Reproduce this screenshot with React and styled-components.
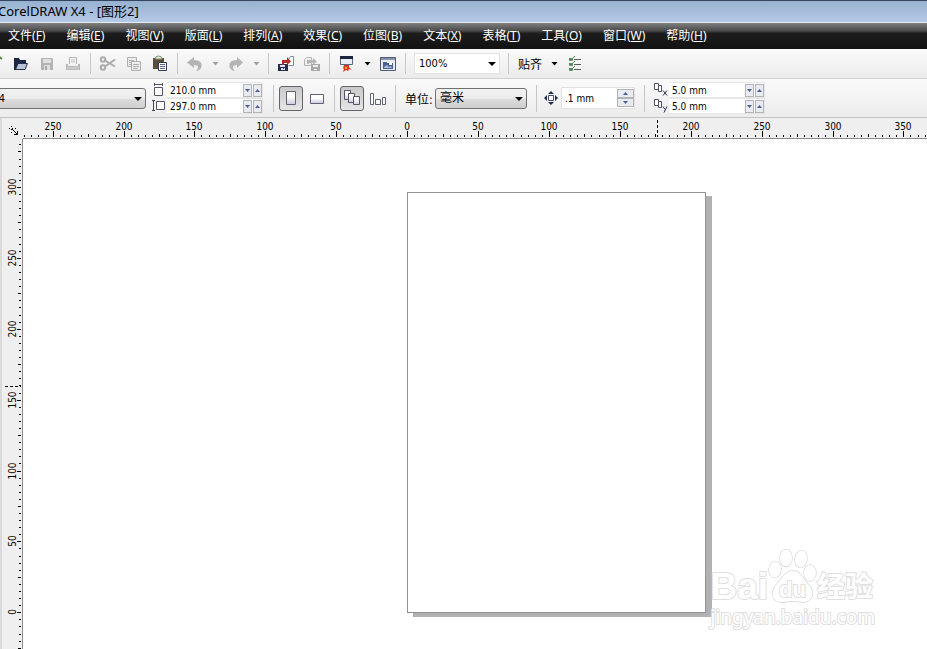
import React, { useEffect, useState } from 'react';
import styled, { createGlobalStyle } from 'styled-components';

const PX_PER_MM = 1.418;
const ORIGIN_X = 407.6;
const ORIGIN_Y = 473.8;
const RULER_SIZE = 23;
const HEADER_HEIGHT = 139;

const menus = [
    ['文件', 'F'], ['编辑', 'E'], ['视图', 'V'], ['版面', 'L'], ['排列', 'A'], ['效果', 'C'],
    ['位图', 'B'], ['文本', 'X'], ['表格', 'T'], ['工具', 'O'], ['窗口', 'W'], ['帮助', 'H'],
];

const readSize = () => ({ width: window.innerWidth, height: window.innerHeight });

const useWindowSize = () => {
    const [size, setSize] = useState(readSize);

    useEffect(() => {
        const onResize = () => setSize(readSize());
        window.addEventListener('resize', onResize);
        return () => window.removeEventListener('resize', onResize);
    }, []);

    return size;
};

// every 5 mm between the two positions, rounded inwards
const steps = (from, to) => {
    const list = [];
    const last = Math.floor(to / PX_PER_MM / 5) * 5;
    for (let mm = Math.ceil(from / PX_PER_MM / 5) * 5; mm <= last; mm += 5) list.push(mm);
    return list;
};

const tickLength = (mm, major) => {
    if (mm % 50 === 0) return major;
    return mm % 25 === 0 ? 3 : 2;
};

const Caret = ({ large }) => (
    large
        ? <svg width="8" height="4" viewBox="0 0 8 4"><path d="M0 0h8L4 4z" fill="currentColor" /></svg>
        : <svg width="7" height="4" viewBox="0 0 7 4"><path d="M.5 0h6l-3 3.500z" fill="currentColor" /></svg>
);

const icons = {
    create: <path d="M3 2h9v13H3z M12 1l4 3" fill="#fff" stroke="#4f8d3a" strokeWidth="2" />,
    open: (
        <>
            <path d="M2 3h5l1 2h6v3H7l-3 7H2z" fill="#1d2745" />
            <path d="M6 8.500h9.500l-2.500 6H3.500z" fill="#b9c4d6" stroke="#26304f" />
        </>
    ),
    save: (
        <>
            <path d="M3 3h11l1 1v11H3z" fill="#b3b3b3" />
            <path d="M5 4h8v4H5zM6 10h6v5H6z" fill="#e0e0e0" />
            <path d="M7 11h2v4H7z" fill="#aaa" />
        </>
    ),
    print: (
        <>
            <path d="M5.500 9V2.500h7V9" fill="#f4f4f4" stroke="#b5b5b5" />
            <path d="M2 9h2v2h10V9h2v6H2z" fill="#b9b9b9" />
            <path d="M7 5h4M7 7h4" stroke="#c2c2c2" />
            <path d="M3 13h12" stroke="#ddd" />
        </>
    ),
    cut: (
        <g fill="none" stroke="#ababab" strokeWidth="2">
            <circle cx="4" cy="4.500" r="2.200" />
            <circle cx="4" cy="12.500" r="2.200" />
            <path d="M6 5.500l10 6M6 11.500l10-7" />
        </g>
    ),
    copy: (
        <g fill="#eee" stroke="#b0b0b0">
            <path d="M2.500 2.500h9v9h-9z" />
            <path d="M6.500 6.500h9v9h-9z" />
            <path d="M4 5.500h5M4 7.500h2M4 9.500h2M8 9.500h6M8 11.500h6M8 13.500h5" />
        </g>
    ),
    paste: (
        <>
            <path d="M2 3h11v11H2z" fill="#5b4c3d" />
            <path d="M4 4h7a3.500 3 0 0 0-7 0z" fill="#e6e9dc" stroke="#84936f" />
            <path d="M7.500 7.500h8v8h-8z" fill="#fff" stroke="#303852" />
            <path d="M9 9.500h5M9 11.500h5M9 13.500h5" stroke="#59627e" />
        </>
    ),
    undo: <path d="M8 2v3c6 0 9 3 7 8-1 2-3 3-5 3 3-3 3-6-2-6v3L1 7.500z" fill="#b4b4b4" />,
    redo: <path d="M10 2v3c-6 0-9 3-7 8 1 2 3 3 5 3-3-3-3-6 2-6v3l6-5.500z" fill="#b4b4b4" />,
    importFile: (
        <>
            <path d="M11.500 4.500l2-3h3v9h-5" fill="#fff" stroke="#7988a6" />
            <path d="M1 9h10v7H1z" fill="#252c50" />
            <path d="M3 10h5v2H3zM4 13h4v2H4z" fill="#dfe4ee" />
            <path d="M6 13h1v1H6z" fill="#252c50" />
            <path d="M5 10V5h5V2l4 4.500L10 10V8H7v2z" fill="#b72a2a" />
        </>
    ),
    exportFile: (
        <>
            <path d="M1.500 4.500l2-2h5v8h-7z" fill="#eee" stroke="#b5b5b5" />
            <path d="M8 9h9v7H8z" fill="#aaa" />
            <path d="M10 10h5v2h-5zM11 14h3v1h-3z" fill="#eee" />
            <path d="M4 9V5h6V3l4 3.500L10 10V8H6v1z" fill="#b5b5b5" />
        </>
    ),
    launcher: (
        <>
            <path d="M2.500 2.500h12v7h-12z" fill="#e9edf4" stroke="#596783" />
            <path d="M2 1h13v3H2z" fill="#1c2442" />
            <path d="M6 10h5v2l3 3-3-1-1 2-2-1-3 2 1-3-1-1z" fill="#d9391f" />
            <path d="M7 12h2v2H7z" fill="#f3a73c" />
        </>
    ),
    welcome: (
        <>
            <path d="M1.500 2.500h15v13h-15z" fill="#e9edf3" stroke="#4b597c" />
            <path d="M2 3h14v2H2z" fill="#8791a8" />
            <path d="M4 7h4v1h6v6H4z" fill="#466190" />
            <path d="M10 7h3v3h-3z" fill="#fff" />
            <path d="M5 12l3-2 2 2 2-1 1 2H5z" fill="#a9bbd6" />
        </>
    ),
    options: (
        <>
            <path d="M8 4.500h7M8 9.500h7M8 14.500h7" stroke="#52605d" />
            <path d="M3.500 3.500h3v2h-3zM3.500 8.500h3v2h-3zM3.500 13.500h3v2h-3z" fill="none" stroke="#6a8570" />
            <path d="M3 3l2 2 4-4M3 8l2 2 4-4M3 13l2 2 4-4" fill="none" stroke="#4a8a50" />
        </>
    ),
    portrait: <path d="M4.500 2.500h9v13h-9z" fill="url(#sheet)" stroke="#606078" />,
    landscape: <path d="M2.500 5.500h13v9h-13z" fill="url(#sheet)" stroke="#606078" />,
    allPages: (
        <g fill="url(#sheet)" stroke="#555568">
            <path d="M1.500 1.500h6v9h-6z" />
            <path d="M5.500 4.500h6v9h-6z" />
            <path d="M10.500 7.500h6v8h-6z" />
        </g>
    ),
    onePage: (
        <g fill="#fff" stroke="#606078">
            <path d="M1.500 4.500h3v11h-3z" />
            <path d="M6.500 10.500h5v5h-5z" />
            <path d="M13.500 8.500h3v7h-3z" />
        </g>
    ),
    nudge: (
        <>
            <path d="M6.500 6.500h5v5h-5z" fill="#fff" stroke="#454e68" />
            <path d="M9 2l3 3H6zM9 16l3-3H6zM2 9l3-3v6zM16 9l-3-3v6z" fill="#242d4b" />
        </>
    ),
};

const Icon = ({ name }) => (
    <svg width="18" height="18" viewBox="0 0 18 18" aria-hidden="true">
        <defs>
            <linearGradient id="sheet" x1="0" y1="0" x2="0" y2="1">
                <stop offset="0.4" stopColor="#fff" />
                <stop offset="1" stopColor="#c8c9de" />
            </linearGradient>
        </defs>
        {icons[name]}
    </svg>
);

const WidthIcon = () => (
    <svg width="14" height="16" viewBox="0 0 14 16">
        <path d="M2.500 5.500h8v8h-8z" fill="#fff" stroke="#555568" />
        <path d="M2.500 1v3M10.500 1v3M3 2.500h7" stroke="#555568" />
    </svg>
);

const HeightIcon = () => (
    <svg width="14" height="16" viewBox="0 0 14 16">
        <path d="M4.500 3.500h8v8h-8z" fill="#fff" stroke="#555568" />
        <path d="M1.500 3v9M0 2.500h3M0 12.500h3" stroke="#454558" />
    </svg>
);

const OffsetIcon = ({ axis }) => (
    <svg width="16" height="16" viewBox="0 0 16 16">
        <path d="M2.500 1.500h4v6h-4z" fill="#fff" stroke="#4c526a" />
        <path d="M6.500 3.500h3v6h-3z" fill="#fff" stroke="#4c526a" />
        <path
            d={axis === 'x' ? 'M11 8.500l4 5M15 8.500l-4 5' : 'M11 8.500l2 3M15 8.500l-3 6'}
            stroke="#303650"
            fill="none"
        />
    </svg>
);

const Arrow = ({ up }) => (
    <svg width="5" height="3" viewBox="0 0 5 3"><path d={up ? 'M0 3h5L2.500 0z' : 'M0 0h5L2.500 3z'} fill="#4b5c92" /></svg>
);

const Tool = ({ name, label, disabled }) => (
    <ToolButton type="button" aria-label={label} disabled={disabled}><Icon name={name} /></ToolButton>
);

const Drop = ({ label, muted }) => (
    <DropButton type="button" aria-label={label} $muted={muted}><Caret /></DropButton>
);

const Spin = ({ id, label, icon, value }) => (
    <SpinRow>
        <FieldIcon htmlFor={id} aria-label={label}>{icon}</FieldIcon>
        <FieldBox>
            <Field id={id} defaultValue={value} />
            <StepButton type="button" aria-label={`${label} -`}><Arrow /></StepButton>
            <StepButton type="button" aria-label={`${label} +`}><Arrow up /></StepButton>
        </FieldBox>
    </SpinRow>
);

const HorizontalRuler = ({ width }) => (
    <TopRuler aria-hidden="true">
        {steps(RULER_SIZE - ORIGIN_X, width - ORIGIN_X).map((mm) => {
            const x = Math.floor(ORIGIN_X + mm * PX_PER_MM);
            const length = tickLength(mm, 6);
            return (
                <g key={mm}>
                    <rect x={x} y={19 - length} width="1" height={length} />
                    {mm % 50 === 0 && x < width - 10 && <text x={x} y="12" textAnchor="middle">{Math.abs(mm)}</text>}
                </g>
            );
        })}
        <path d="M657.500 2v17" stroke="#000" strokeDasharray="3 2" />
    </TopRuler>
);

const VerticalRuler = ({ height }) => (
    <SideRuler aria-hidden="true">
        {steps(ORIGIN_Y - height, ORIGIN_Y).map((mm) => {
            const y = Math.floor(ORIGIN_Y - mm * PX_PER_MM);
            const length = tickLength(mm, 4);
            return (
                <g key={mm}>
                    <rect x={19 - length} y={y} width={length} height="1" />
                    {mm % 50 === 0 && y < height - 10 && (
                        <text transform={`translate(14 ${y}) rotate(-90)`} textAnchor="middle">{Math.abs(mm)}</text>
                    )}
                </g>
            );
        })}
        <path d="M3 247.500h16" stroke="#000" strokeDasharray="3 2" />
    </SideRuler>
);

const Watermark = () => (
    <Mark>
        <Brand>
            <BrandText>Bai</BrandText>
            <Paw>
                <svg width="49" height="54" viewBox="0 0 49 54" fill="#fff" stroke="#d6d6d6" strokeWidth="1.300">
                    <ellipse cx="7" cy="20.500" rx="6" ry="8" transform="rotate(8 7 20.5)" />
                    <ellipse cx="18" cy="9" rx="6" ry="8.500" />
                    <ellipse cx="33" cy="10" rx="6" ry="8.500" transform="rotate(8 33 10)" />
                    <ellipse cx="42" cy="24" rx="6" ry="8" />
                    <path d="M25 22c8 0 9 7 15 13 7 7 6 17-4 18-4 0-7-1-11-1s-7 1-11 1C3 53 2 42 9 35c6-6 8-13 16-13z" />
                </svg>
                <PawText>du</PawText>
            </Paw>
            <BrandCjk>经验</BrandCjk>
        </Brand>
        <Site>jingyan.baidu.com</Site>
    </Mark>
);

const App = () => {
    const { width, height } = useWindowSize();

    return (
        <Window>
            <GlobalStyle />
            <TitleBar>CorelDRAW X4 - [图形2]</TitleBar>
            <MenuBar>
                {menus.map(([name, key]) => (
                    <MenuItem type="button" key={key}>{name}(<u>{key}</u>)</MenuItem>
                ))}
            </MenuBar>
            <Toolbar>
                <Tool name="create" label="新建" />
                <Tool name="open" label="打开" />
                <Tool name="save" label="保存" disabled />
                <Tool name="print" label="打印" disabled />
                <Divider />
                <Tool name="cut" label="剪切" disabled />
                <Tool name="copy" label="复制" disabled />
                <Tool name="paste" label="粘贴" />
                <Divider />
                <Tool name="undo" label="撤消" disabled />
                <Drop label="撤消列表" muted />
                <Tool name="redo" label="重做" disabled />
                <Drop label="重做列表" muted />
                <Divider />
                <Tool name="importFile" label="导入" />
                <Tool name="exportFile" label="导出" disabled />
                <Divider />
                <Tool name="launcher" label="应用程序启动器" />
                <Drop label="应用程序列表" />
                <Tool name="welcome" label="欢迎屏幕" />
                <Divider />
                <ZoomBox>
                    <ZoomSelect aria-label="缩放级别" defaultValue="100%"><option>100%</option></ZoomSelect>
                    <SelectArrow><Caret large /></SelectArrow>
                </ZoomBox>
                <Divider />
                <TextButton type="button">贴齐</TextButton>
                <Drop label="贴齐列表" />
                <Tool name="options" label="选项" />
            </Toolbar>
            <PropertyBar>
                <PaperBox>
                    <PaperSelect aria-label="纸张类型" defaultValue="A4"><option>A4</option></PaperSelect>
                    <SelectArrow><Caret large /></SelectArrow>
                </PaperBox>
                <SpinGroup>
                    <Spin id="paper-width" label="宽度" icon={<WidthIcon />} value="210.0 mm" />
                    <Spin id="paper-height" label="高度" icon={<HeightIcon />} value="297.0 mm" />
                </SpinGroup>
                <Divider $wide />
                <ToggleGroup>
                    <Toggle type="button" aria-label="纵向" aria-pressed="true" $pressed><Icon name="portrait" /></Toggle>
                    <Toggle type="button" aria-label="横向" aria-pressed="false"><Icon name="landscape" /></Toggle>
                </ToggleGroup>
                <Divider $wide />
                <ToggleGroup>
                    <Toggle type="button" aria-label="所有页面" aria-pressed="true" $pressed><Icon name="allPages" /></Toggle>
                    <Toggle type="button" aria-label="当前页面" aria-pressed="false"><Icon name="onePage" /></Toggle>
                </ToggleGroup>
                <Divider $wide />
                <UnitLabel htmlFor="units">单位:</UnitLabel>
                <UnitBox>
                    <Select id="units" defaultValue="毫米"><option>毫米</option></Select>
                    <SelectArrow><Caret large /></SelectArrow>
                </UnitBox>
                <Divider $wide />
                <FieldIcon htmlFor="nudge" aria-label="微调偏移"><Icon name="nudge" /></FieldIcon>
                <NudgeBox>
                    <Field id="nudge" defaultValue=".1 mm" />
                    <NudgeSteps>
                        <NudgeStep type="button" aria-label="微调偏移 +"><Arrow up /></NudgeStep>
                        <NudgeStep type="button" aria-label="微调偏移 -"><Arrow /></NudgeStep>
                    </NudgeSteps>
                </NudgeBox>
                <Divider $wide />
                <SpinGroup>
                    <Spin id="copy-x" label="再制距离 X" icon={<OffsetIcon axis="x" />} value="5.0 mm" />
                    <Spin id="copy-y" label="再制距离 Y" icon={<OffsetIcon axis="y" />} value="5.0 mm" />
                </SpinGroup>
            </PropertyBar>
            <RulerRow>
                <HorizontalRuler width={width} />
                <Corner>
                    <svg width="10" height="10" viewBox="0 0 10 10" stroke="#000" fill="none">
                        <path d="M0 2.500h9M2.500 0v9" strokeDasharray="1 2" />
                        <path d="M3 3l5 5M8.500 5v3.500H5" />
                    </svg>
                </Corner>
            </RulerRow>
            <Workspace>
                <VerticalRuler height={height - HEADER_HEIGHT} />
                <Canvas>
                    <Page />
                    <Watermark />
                </Canvas>
            </Workspace>
        </Window>
    );
};

export default App;


const GlobalStyle = createGlobalStyle`
    * {
        box-sizing: border-box;
    }
    body {
        margin: 0;
        background: #fff;
    }
    body, button, input, select {
        font-family: "DejaVu Sans Condensed", "Noto Sans CJK SC", sans-serif;
        font-size: 10px;
        color: #000;
    }
    button, input, select {
        margin: 0;
        padding: 0;
        border: 0;
        background: none;
    }
    svg {
        display: block;
    }
`;

const Window = styled.div`
    display: flex;
    flex-direction: column;
    min-height: 100vh;
    overflow: hidden;
`;

const TitleBar = styled.header`
    height: 23px;
    border-top: 1px solid #34465f;
    border-bottom: 1px solid #e4ecf5;
    background: linear-gradient(#97b1d0, #b4cae6);
    font-family: "Noto Sans", "Noto Sans CJK SC", sans-serif;
    font-size: 13px;
    line-height: 20px;
    text-indent: -2px;
    white-space: nowrap;
`;

const MenuBar = styled.nav`
    display: flex;
    gap: 21px;
    height: 26px;
    padding: 0 8px;
    background: linear-gradient(#808080, #4a4a4a 30%, #1c1c1c 40%, #121212);
`;

const MenuItem = styled.button`
    font-family: "Noto Sans", "Noto Sans CJK SC", sans-serif;
    font-size: 12px;
    line-height: 26px;
    color: #fff;
    white-space: nowrap;
`;

const Toolbar = styled.div`
    display: flex;
    align-items: center;
    height: 30px;
    margin-left: -18px;
    border-bottom: 1px solid #d0d0d0;
    background: linear-gradient(#fafafa, #ececec);
`;

const PropertyBar = styled.div`
    display: flex;
    align-items: center;
    height: 39px;
    border-bottom: 1px solid #c4c4c4;
    background: linear-gradient(#fafafa, #ececec);
`;

const Divider = styled.span`
    flex: none;
    width: 1px;
    height: ${({ $wide }) => ($wide ? '27px' : '21px')};
    margin: ${({ $wide }) => ($wide ? '0 5px' : '0 4px')};
    background: #c6c6c6;
`;

const ToolButton = styled.button`
    display: flex;
    flex: none;
    align-items: center;
    justify-content: center;
    width: 26px;
    height: 24px;
`;

const DropButton = styled.button`
    display: flex;
    flex: none;
    align-items: center;
    justify-content: center;
    width: 15px;
    height: 24px;
    color: ${({ $muted }) => ($muted ? '#a0a0a0' : '#000')};
`;

const TextButton = styled.button`
    flex: none;
    padding: 0 5px;
    font-size: 12px;
`;

const SelectBox = styled.div`
    position: relative;
    flex: none;
`;

const ZoomBox = styled(SelectBox)`
    width: 86px;
    margin: 0 4px;
`;

const PaperBox = styled(SelectBox)`
    width: 166px;
    margin: 0 2px 0 -20px;
`;

const UnitBox = styled(SelectBox)`
    width: 92px;
    margin-right: 4px;
`;

const Select = styled.select`
    width: 100%;
    height: 21px;
    padding: 0 4px;
    border: 1px solid #707070;
    border-radius: 3px;
    background: linear-gradient(#f2f2f2, #ebebeb 50%, #dcdcdc 50%, #cfcfcf);
    font-size: 12px;
    appearance: none;
`;

const PaperSelect = styled(Select)`
    padding: 0 11px;
    font-size: 11px;
`;

const ZoomSelect = styled(Select)`
    border-color: #e2e2e2;
    border-radius: 0;
    background: #fff;
    font-size: 11px;
`;

const SelectArrow = styled.span`
    position: absolute;
    top: 9px;
    right: 4px;
    pointer-events: none;
`;

const SpinGroup = styled.div`
    display: flex;
    flex-direction: column;
    margin-right: 5px;
`;

const SpinRow = styled.div`
    display: flex;
`;

const FieldIcon = styled.label`
    display: flex;
    flex: none;
    justify-content: flex-end;
    width: 19px;
    padding-right: 1px;
`;

const FieldBox = styled.div`
    display: flex;
    align-items: center;
    gap: 1px;
    width: 96px;
    height: 16px;
    border: 1px solid #e6e6e6;
    border-left: 0;
    background: #fff;
`;

const Field = styled.input`
    flex: 1;
    min-width: 0;
    height: 14px;
    padding-left: 3px;
`;

const StepButton = styled.button`
    display: flex;
    align-items: center;
    justify-content: center;
    width: 9px;
    height: 13px;
    border: 1px solid #b4b4b4;
    background: #e9ebf3;
`;

const NudgeBox = styled.div`
    display: flex;
    align-items: center;
    width: 74px;
    height: 22px;
    margin-right: 4px;
    border: 1px solid #e2e2e2;
    background: #fff;
`;

const NudgeSteps = styled.div`
    display: flex;
    flex-direction: column;
`;

const NudgeStep = styled.button`
    display: flex;
    align-items: center;
    justify-content: center;
    width: 17px;
    height: 9px;
    border: 1px solid #b4b4b4;
    background: #e9ebf3;
`;

const ToggleGroup = styled.div`
    display: flex;
    gap: 2px;
`;

const Toggle = styled.button`
    display: flex;
    align-items: center;
    justify-content: center;
    width: 24px;
    height: 25px;
    border: 1px solid ${({ $pressed }) => ($pressed ? '#62656a' : 'transparent')};
    border-radius: 3px;
    background: ${({ $pressed }) => ($pressed ? 'linear-gradient(#c9c9c9, #e6e6e6)' : 'none')};
`;

const UnitLabel = styled.label`
    flex: none;
    width: 30px;
    margin-left: 4px;
    font-size: 12px;
`;

const RulerRow = styled.div`
    position: relative;
    height: 21px;
    border-bottom: 1px solid #8c8c8c;
    background: #efefef;
`;

const TopRuler = styled.svg`
    width: 100%;
    height: 20px;
`;

const Corner = styled.div`
    position: absolute;
    top: 0;
    left: 0;
    width: 23px;
    height: 21px;
    padding: 8px 0 0 7px;
    border-left: 2px solid #dadada;
    background: #efefef;
`;

const Workspace = styled.main`
    display: flex;
    flex: 1;
`;

const SideRuler = styled.svg`
    flex: none;
    width: 23px;
    height: auto;
    border-left: 2px solid #dadada;
    border-right: 1px solid #8c8c8c;
    background: #efefef;
`;

const Canvas = styled.div`
    position: relative;
    flex: 1;
    overflow: hidden;
    background: #fff;
`;

const Page = styled.div`
    position: absolute;
    top: 53px;
    left: 384px;
    width: 299px;
    height: 421px;
    border: 1px solid #929292;
    background: #fff;
    box-shadow: 6px 4px 0 #b1b1b1;
`;

const Mark = styled.div`
    position: absolute;
    right: 52px;
    bottom: 18px;
    font-family: "Liberation Sans", "Noto Sans CJK SC", sans-serif;
    font-weight: 700;
    color: #fff;
    -webkit-text-stroke: 2px #e0e0e0;
    paint-order: stroke fill;
`;

const Brand = styled.div`
    display: flex;
    align-items: flex-end;
`;

const BrandText = styled.span`
    font-size: 37px;
    line-height: 32px;
`;

const BrandCjk = styled.span`
    font-size: 28px;
    line-height: 30px;
`;

const Paw = styled.span`
    position: relative;
`;

const PawText = styled.span`
    position: absolute;
    right: 0;
    bottom: 1px;
    left: 0;
    font-size: 22px;
    line-height: 24px;
    text-align: center;
`;

const Site = styled.div`
    font-family: "Noto Sans", sans-serif;
    font-size: 19px;
    font-weight: 400;
    line-height: 28px;
`;
